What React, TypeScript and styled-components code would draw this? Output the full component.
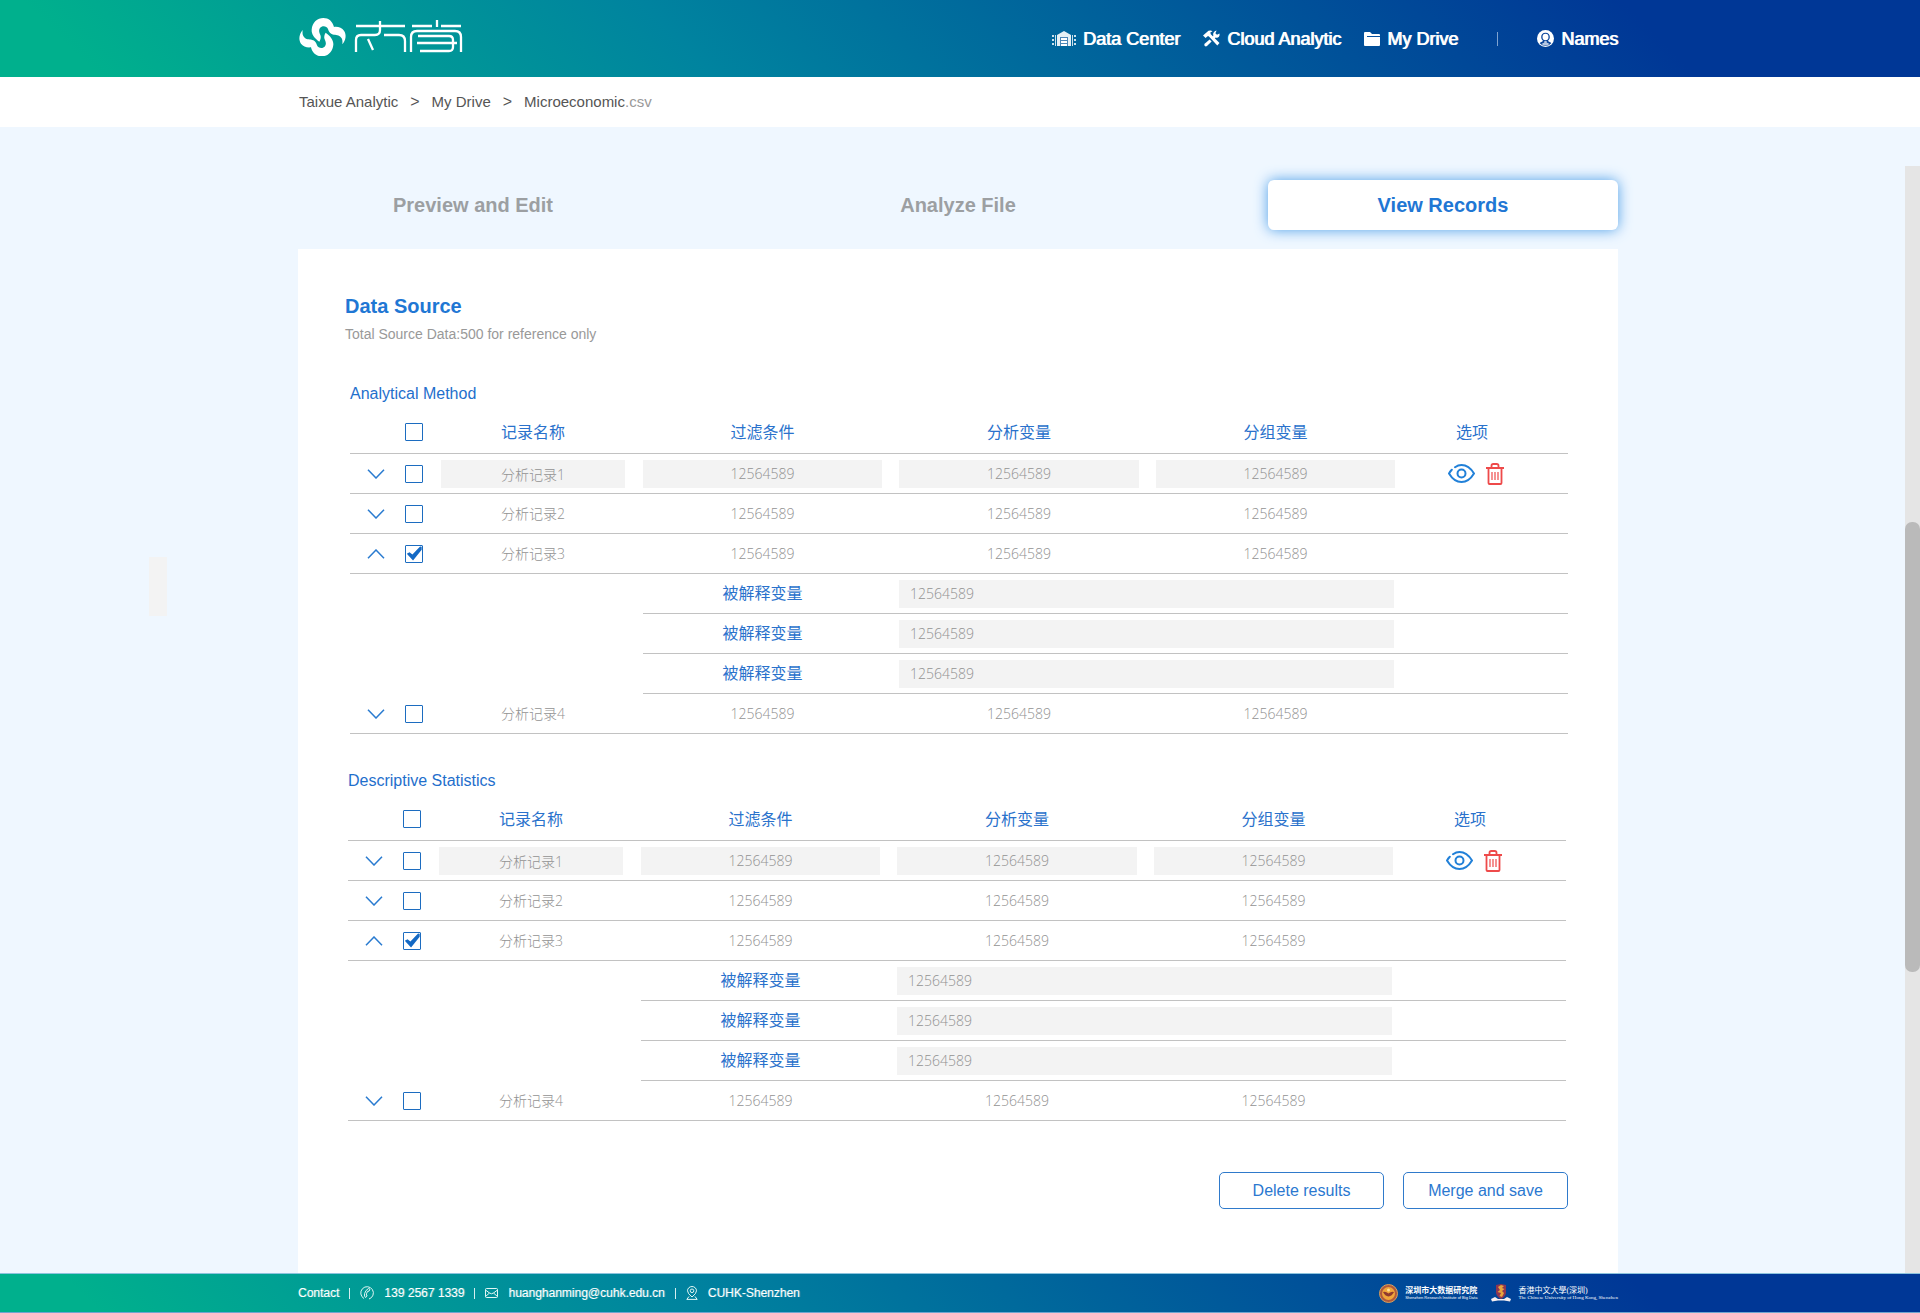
import React, { useState } from 'react';
import styled, { createGlobalStyle, css } from 'styled-components';

const GlobalStyle = createGlobalStyle`
  * { box-sizing: border-box; }
  body {
    margin: 0;
    background: #eff7ff;
    font-family: "Liberation Sans", Arial, "Noto Sans CJK SC", sans-serif;
    font-size: 15px;
    color: #555;
  }
  button, input { font: inherit; }
  a { color: inherit; text-decoration: none; }
`;

const brandGradient = css`
  background: linear-gradient(45deg, #00b08d 5%, #00839f 36%, #003796 85%);
`;

const Page = styled.div`
  min-height: 100vh;
  display: flex;
  flex-direction: column;
`;

const Shell = styled.div`
  width: 100%;
  max-width: 1324px;
  margin: 0 auto;
  padding-right: 4px;
`;

const Header = styled.header`
  ${brandGradient}
  color: #fff;
`;

const HeaderRow = styled(Shell)`
  height: 77px;
  display: flex;
  align-items: center;
  justify-content: space-between;
  padding-left: 1px;
`;

const Nav = styled.nav`
  display: flex;
  align-items: center;
  gap: 23px;
`;

const NavLink = styled.a`
  display: flex;
  align-items: center;
  gap: 7px;
  font-size: 18px;
  line-height: 24px;
  white-space: nowrap;
  text-shadow: 1px 0 #fff;
`;

const NavDivider = styled.span`
  width: 1px;
  height: 14px;
  margin: 0 16px;
  background: #7fa3d0;
`;

const CrumbBar = styled.div`
  background: #fff;
`;

const Crumbs = styled(Shell)`
  height: 50px;
  display: flex;
  align-items: center;
  gap: 12px;
  line-height: 20px;
  padding-left: 1px;
`;

const CrumbArrow = styled.span`
  font-size: 16px;
`;

const Extension = styled.span`
  color: #999;
`;

const Main = styled.main`
  position: relative;
  flex: 1;
  display: flex;
  flex-direction: column;
  padding-top: 53px;
`;

const Content = styled(Shell)`
  flex: 1;
  display: flex;
  flex-direction: column;
  gap: 19px;
`;

const Tabs = styled.div`
  display: flex;
  justify-content: space-between;
`;

const Tab = styled.button<{ $active?: boolean }>`
  width: 350px;
  height: 50px;
  border: 0;
  border-radius: 6px;
  background: ${(p) => (p.$active ? '#fff' : 'transparent')};
  box-shadow: ${(p) => (p.$active ? '0 0 14px #4f9fe8' : 'none')};
  color: ${(p) => (p.$active ? '#1f77d4' : '#9c9fa2')};
  font-size: 20px;
  font-weight: 700;
  cursor: pointer;
`;

const Panel = styled.section`
  flex: 1;
  padding: 45px 50px 64px 47px;
  background: #fff;
`;

const PanelTitle = styled.h1`
  margin: 0;
  font-size: 20px;
  line-height: 24px;
  color: #1f77d4;
`;

const PanelNote = styled.p`
  margin: 6px 0 40px;
  font-size: 14px;
  line-height: 20px;
  color: #999;
`;

const Group = styled.section<{ $start: number; $end: number }>`
  padding-left: ${(p) => p.$start}px;
  padding-right: ${(p) => p.$end}px;
  & + & { margin-top: 37px; }
`;

const GroupTitle = styled.h2`
  margin: 0 0 10px;
  font-size: 16px;
  font-weight: 400;
  line-height: 20px;
  color: #1f6fcc;
`;

const RecordTable = styled.table`
  width: 100%;
  table-layout: fixed;
  border-collapse: separate;
  border-spacing: 0;
  font-family: "Open Sans", "Noto Sans CJK SC", sans-serif;
`;

const Col = styled.col<{ $w?: number }>`
  width: ${(p) => (p.$w ? `${p.$w}px` : 'auto')};
`;

const cell = css`
  height: 40px;
  padding: 0;
  border-bottom: 1px solid #c2c2c2;
  text-align: center;
  line-height: 20px;
`;

const HeadCell = styled.th<{ $start?: number; $end?: number }>`
  ${cell}
  padding: 0 ${(p) => p.$end ?? 0}px 4px ${(p) => p.$start ?? 0}px;
  font-size: 16px;
  font-weight: 400;
  color: #2a72cc;
`;

const Cell = styled.td<{ $start?: number; $end?: number; $plain?: boolean }>`
  ${cell}
  padding: 0 ${(p) => p.$end ?? 0}px 0 ${(p) => p.$start ?? 0}px;
  border-bottom-color: ${(p) => (p.$plain ? 'transparent' : '#c2c2c2')};
  font-size: 14px;
  font-weight: 300;
  color: #929292;
`;

const SubLabel = styled.label`
  font-size: 16px;
  font-weight: 400;
  color: #2a72cc;
`;

const Field = styled.input<{ $left?: boolean }>`
  display: block;
  width: 100%;
  height: 28px;
  padding: 0 11px;
  border: 0;
  border-radius: 0;
  background: #f3f3f3;
  color: #929292;
  font-size: 14px;
  font-weight: 300;
  text-align: ${(p) => (p.$left ? 'left' : 'center')};
`;

const IconButton = styled.button`
  display: inline-flex;
  padding: 0;
  border: 0;
  background: none;
  cursor: pointer;
`;

const Actions = styled.div`
  display: flex;
  align-items: center;
  justify-content: center;
  gap: 11px;
`;

const Check = styled.input`
  appearance: none;
  display: block;
  width: 18px;
  height: 18px;
  margin: 0 auto;
  border: 1px solid #1c6cc0;
  border-radius: 1px;
  background: #fff;
  cursor: pointer;
  &:checked::before {
    content: '';
    display: block;
    width: 16px;
    height: 16px;
    background: #1469c4;
    clip-path: polygon(5% 52%, 22% 42%, 40% 56%, 88% 6%, 98% 8%, 98% 26%, 44% 94%);
  }
`;

const ButtonRow = styled.div`
  display: flex;
  justify-content: flex-end;
  gap: 19px;
  margin-top: 51px;
`;

const OutlineButton = styled.button`
  width: 165px;
  height: 37px;
  border: 1px solid #2f7acb;
  border-radius: 5px;
  background: #fff;
  color: #2b78d0;
  font-size: 16px;
  cursor: pointer;
`;

const ScrollTrack = styled.div`
  position: absolute;
  top: 39px;
  right: 0;
  bottom: 0;
  width: 15px;
  background: #e5e5e5;
`;

const ScrollThumb = styled.div`
  position: absolute;
  top: 356px;
  width: 100%;
  height: 450px;
  border-radius: 7px;
  background: #bababa;
`;

const SideHandle = styled.div`
  position: absolute;
  top: 430px;
  left: 149px;
  width: 18px;
  height: 59px;
  background: #f3f3f3;
`;

const Footer = styled.footer`
  ${brandGradient}
  border-top: 1px solid #8cc3dd;
  border-bottom: 1px solid #6fa5cf;
  color: #fff;
`;

const FooterRow = styled(Shell)`
  height: 38px;
  display: flex;
  align-items: center;
  justify-content: space-between;
`;

const Contacts = styled.address`
  display: flex;
  align-items: center;
  gap: 10px;
  font-size: 12px;
  font-style: normal;
  line-height: 16px;
  text-shadow: 1px 0 rgba(255, 255, 255, 0.35);
`;

const Contact = styled.span`
  display: flex;
  align-items: center;
  gap: 10px;
`;

const ContactDivider = styled.span`
  width: 1px;
  height: 11px;
  background: #d5eef0;
`;

const Partners = styled.div`
  display: flex;
  align-items: center;
  gap: 14px;
`;

const Partner = styled.a`
  display: flex;
  align-items: center;
  gap: 7px;
`;

const PartnerText = styled.span<{ $serif?: boolean }>`
  display: grid;
  font-family: ${(p) =>
    p.$serif
      ? '"Liberation Serif", "Noto Sans CJK TC", serif'
      : '"Liberation Sans", "Noto Sans CJK SC", sans-serif'};
  font-size: 8px;
  font-weight: ${(p) => (p.$serif ? 400 : 700)};
  line-height: 9px;
  white-space: nowrap;
`;

const PartnerSub = styled.small<{ $size: number }>`
  font-size: ${(p) => p.$size}px;
  font-weight: 400;
  line-height: 6px;
`;

const swirl =
  'M118 124C104 114 94 102 95 88C97 66 112 53 130 53C146 53 158 63 162 80C174 78 186 83 192 91C200 103 198 119 187 132C188 122 188 115 181 109C174 102 164 106 155 101C148 97 146 92 144 86C140 76 126 75 120 83C114 92 120 100 122 107C123 114 121 119 118 124Z';

const Logo = () => (
  <svg width="164" height="38" viewBox="0 0 164 38" role="img" aria-label="Taixue">
    <g transform="scale(.3333) translate(-57 -53)" fill="#fff">
      <path d={swirl} />
      <path d={swirl} transform="rotate(180 127.5 110.5)" />
    </g>
    <g fill="none" stroke="#fff" strokeWidth="2.300">
      <path d="M57 8H106M81 3V12Q81 17 76 17H62Q57 17 57 22V34M85 17H100Q106 17 106 23V34M69 21L74 32" />
      <path d="M113 8H133M142 8H162M138 2V9M112 34V19Q112 13 118 13H156Q162 13 162 19V34" />
      <path d="M119 18H150Q154 18 154 22V29Q154 33 150 33H121M118 25H158" />
    </g>
  </svg>
);

const DataCenterIcon = () => (
  <svg width="24" height="18" viewBox="0 0 24 18" fill="#fff" aria-hidden="true">
    <path d="M12 1L19 5V16H5V5Z" opacity=".9" />
    <path d="M8 7H16V16H8Z" fill="#0a5a9c" opacity=".7" />
    <path d="M9 8H15V10H9ZM9 11H15V13H9ZM9 14H15V16H9Z" />
    <path d="M0 5H2V7H0ZM0 9H2V11H0ZM0 13H2V15H0ZM22 5H24V7H22ZM22 9H24V11H22ZM22 13H24V15H22ZM3 5H4V16H3ZM20 5H21V16H20Z" opacity=".8" />
  </svg>
);

const ToolsIcon = () => (
  <svg width="17" height="17" viewBox="0 0 17 17" fill="#fff" aria-hidden="true">
    <path d="M0 5.500L5.500 .8Q8 0 9.500 1.200L7.300 2.600L7.800 4.200L16.500 13L14.300 15.500L5.700 6.300L4.600 6.200L2.600 8Z" />
    <path d="M13.600 .6L12.400 3.200L14 4.800L16.500 3.500Q17 6.600 14.800 7.600Q13.600 8 12.600 7.600L11.300 8.900L9.300 6.900L10.300 5.900Q9.600 3.700 11 2Q12.100 .7 13.600 .6Z" />
    <path d="M6.600 9.400L8.600 11.500L4 16Q2.800 16.800 1.800 15.900T1.600 13.800Z" />
  </svg>
);

const FolderIcon = () => (
  <svg width="16" height="14" viewBox="0 0 16 14" aria-hidden="true">
    <path d="M0 1Q0 0 1 0H6L8 2H15Q16 2 16 3V13Q16 14 15 14H1Q0 14 0 13Z" fill="#fff" />
    <path d="M3 4.500H16" stroke="#0550a0" strokeWidth="1" />
  </svg>
);

const UserIcon = () => (
  <svg width="17" height="17" viewBox="0 0 17 17" aria-hidden="true">
    <circle cx="8.5" cy="8.500" r="8.500" fill="#fff" />
    <path
      d="M8.500 2.800C11.300 2.800 12.800 4.600 12.800 7C12.800 8.800 12 10 11 10.800C11.400 12 14 12 14.300 13.300Q12 15.900 8.500 15.900T2.700 13.300C3 12 5.600 12 6 10.800C5 10 4.200 8.800 4.200 7C4.200 4.600 5.700 2.800 8.500 2.800Z"
      fill="#0a459b"
    />
    <ellipse cx="8.5" cy="7" rx="3" ry="3.300" fill="#fff" />
    <path d="M4.500 14Q5.500 13.300 7.300 12.600V11H9.700V12.600Q11.500 13.300 12.500 14Q10.500 15.500 8.500 15.500T4.500 14Z" fill="#fff" opacity=".7" />
  </svg>
);

const Chevron = ({ up }: { up: boolean }) => (
  <svg width="18" height="10" viewBox="0 0 18 10" fill="none" stroke="#2a7bd0" strokeWidth="1.500" aria-hidden="true">
    <path d={up ? 'M1 9.300L9 1L17 9.300' : 'M1 .7L9 9L17 .7'} />
  </svg>
);

const EyeIcon = () => (
  <svg width="27" height="19" viewBox="0 0 27 19" fill="none" stroke="#2180d8" strokeWidth="2" strokeLinecap="round" aria-hidden="true">
    <path d="M7 3.200C9 1.800 11 1 13.500 1C19 1 23 4.500 26 9.500C23 14.500 19 18 13.500 18S4 14.500 1 9.500Q2.200 7.400 3.800 5.800" />
    <circle cx="13.5" cy="9.500" r="4" />
  </svg>
);

const TrashIcon = () => (
  <svg width="18" height="22" viewBox="0 0 18 22" fill="none" stroke="#ee4a4a" strokeWidth="1.800" aria-hidden="true">
    <path d="M0 5H18M5.500 5V2.800Q5.500 1 7.300 1H10.700Q12.500 1 12.500 2.800V5M2.500 5V20Q2.500 21 3.500 21H14.500Q15.500 21 15.500 20V5" />
    <path d="M6 9V17M9 9V17M12 9V17" strokeWidth="1.200" />
  </svg>
);

const PhoneIcon = () => (
  <svg width="14" height="14" viewBox="0 0 14 14" fill="none" stroke="#e2f6f4" aria-hidden="true">
    <path d="M4 12.500A6.300 6.300 0 1 1 9 13" />
    <path d="M8.500 2.500L10 3.200L9 5.200H7.800Q6.200 7.200 6.400 9L7.200 10L5.500 11.500Q4 10.500 4.600 7.500Q5.600 4 8.500 2.500Z" />
  </svg>
);

const MailIcon = () => (
  <svg width="13" height="10" viewBox="0 0 13 10" fill="none" stroke="#e2f6f4" aria-hidden="true">
    <rect x=".5" y=".5" width="12" height="9" rx="1" />
    <path d="M.5 2L4.500 5Q6.500 6.500 8.500 5L12.500 2M.5 8.500L4.500 5M12.500 8.500L8.500 5" />
  </svg>
);

const PinIcon = () => (
  <svg width="12" height="14" viewBox="0 0 12 14" fill="none" stroke="#e2f6f4" aria-hidden="true">
    <path d="M6 11Q1.500 7.500 1.500 4.800A4.500 4.300 0 0 1 10.500 4.800Q10.500 7.500 6 11Z" />
    <circle cx="6" cy="4.800" r="1.800" />
    <path d="M3 10.500L.8 13.400H11.200L9 10.500" />
  </svg>
);

const SealLogo = () => (
  <svg width="19" height="19" viewBox="0 0 19 19" aria-hidden="true">
    <circle cx="9.500" cy="9.500" r="9" fill="#b0593c" stroke="#d9a05c" />
    <circle cx="9.500" cy="9.500" r="6.500" fill="#f0a63a" />
    <path d="M4 8Q6.500 7 9.500 9.500Q12.500 7 15 8Q13 12 9.500 12.500Q6 12 4 8Z" fill="#8f3a30" />
    <circle cx="9.500" cy="6" r="1.500" fill="#ffe09a" />
  </svg>
);

const CrestLogo = () => (
  <svg width="20" height="18" viewBox="0 0 20 18" aria-hidden="true">
    <path d="M5 1L10 0L15 1V9Q14 13 10 15Q6 13 5 9Z" fill="#8c3553" />
    <path d="M7 3L10 1L13 2L11 4L13.500 5L11 7L13 9L11 13L8.500 12L10 9L6.500 8L9 6Z" fill="#e8a63c" />
    <path d="M0 15L4 13L7 15H13L16 13L20 15L19 17.500L13 16.500H7L1 17.500Z" fill="#f5eef0" />
  </svg>
);

const VALUE = '12564589';
const SUB_ROWS = ['被解释变量', '被解释变量', '被解释变量'];
const RECORDS = [
  { name: '分析记录1', editable: true },
  { name: '分析记录2', editable: false },
  { name: '分析记录3', editable: false },
  { name: '分析记录4', editable: false },
];

function RecordGroup({ id, title, start, end }: { id: string; title: string; start: number; end: number }) {
  const [open, setOpen] = useState<number[]>([2]);
  const toggle = (i: number) =>
    setOpen((list) => (list.includes(i) ? list.filter((n) => n !== i) : [...list, i]));

  return (
    <Group $start={start} $end={end}>
      <GroupTitle>{title}</GroupTitle>
      <RecordTable>
        <colgroup>
          <Col $w={52} />
          <Col $w={24} />
          <Col $w={217} />
          <Col $w={256} />
          <Col $w={257} />
          <Col $w={256} />
          <Col />
        </colgroup>
        <thead>
          <tr>
            <HeadCell />
            <HeadCell>
              <Check type="checkbox" aria-label="Select all records" />
            </HeadCell>
            <HeadCell $start={15} $end={18}>记录名称</HeadCell>
            <HeadCell $end={17}>过滤条件</HeadCell>
            <HeadCell $end={17}>分析变量</HeadCell>
            <HeadCell $end={17}>分组变量</HeadCell>
            <HeadCell $end={36}>选项</HeadCell>
          </tr>
        </thead>
        <tbody>
          {RECORDS.map((record, i) => {
            const expanded = open.includes(i);
            return (
              <React.Fragment key={record.name}>
                <tr>
                  <Cell>
                    <IconButton type="button" aria-label="Toggle details" aria-expanded={expanded} onClick={() => toggle(i)}>
                      <Chevron up={expanded} />
                    </IconButton>
                  </Cell>
                  <Cell>
                    <Check type="checkbox" aria-label={record.name} defaultChecked={i === 2} />
                  </Cell>
                  <Cell $start={15} $end={18}>
                    {record.editable ? <Field aria-label="记录名称" defaultValue={record.name} /> : record.name}
                  </Cell>
                  {['过滤条件', '分析变量', '分组变量'].map((label) => (
                    <Cell key={label} $end={17}>
                      {record.editable ? <Field aria-label={label} defaultValue={VALUE} /> : VALUE}
                    </Cell>
                  ))}
                  <Cell $end={28}>
                    {record.editable && (
                      <Actions>
                        <IconButton type="button" aria-label="View">
                          <EyeIcon />
                        </IconButton>
                        <IconButton type="button" aria-label="Delete">
                          <TrashIcon />
                        </IconButton>
                      </Actions>
                    )}
                  </Cell>
                </tr>
                {expanded &&
                  SUB_ROWS.map((label, n) => (
                    <tr key={n}>
                      <Cell colSpan={3} $plain />
                      <Cell $end={17}>
                        <SubLabel htmlFor={`${id}-${i}-${n}`}>{label}</SubLabel>
                      </Cell>
                      <Cell colSpan={2} $end={18}>
                        <Field id={`${id}-${i}-${n}`} $left defaultValue={VALUE} />
                      </Cell>
                      <Cell />
                    </tr>
                  ))}
              </React.Fragment>
            );
          })}
        </tbody>
      </RecordTable>
    </Group>
  );
}

export default function App() {
  return (
    <Page>
      <GlobalStyle />
      <Header>
        <HeaderRow>
          <a href="#home">
            <Logo />
          </a>
          <Nav>
            <NavLink href="#data">
              <DataCenterIcon />
              Data Center
            </NavLink>
            <NavLink href="#cloud">
              <ToolsIcon />
              Cloud Analytic
            </NavLink>
            <NavLink href="#drive">
              <FolderIcon />
              My Drive
            </NavLink>
            <NavDivider />
            <NavLink href="#account">
              <UserIcon />
              Names
            </NavLink>
          </Nav>
        </HeaderRow>
      </Header>

      <CrumbBar>
        <Crumbs as="nav">
          <a href="#analytic">Taixue Analytic</a>
          <CrumbArrow>&gt;</CrumbArrow>
          <a href="#drive">My Drive</a>
          <CrumbArrow>&gt;</CrumbArrow>
          <span>
            Microeconomic<Extension>.csv</Extension>
          </span>
        </Crumbs>
      </CrumbBar>

      <Main>
        <Content>
          <Tabs>
            <Tab type="button">Preview and Edit</Tab>
            <Tab type="button">Analyze File</Tab>
            <Tab type="button" $active>
              View Records
            </Tab>
          </Tabs>
          <Panel>
            <PanelTitle>Data Source</PanelTitle>
            <PanelNote>Total Source Data:500 for reference only</PanelNote>
            <RecordGroup id="method" title="Analytical Method" start={5} end={0} />
            <RecordGroup id="stats" title="Descriptive Statistics" start={3} end={2} />
            <ButtonRow>
              <OutlineButton type="button">Delete results</OutlineButton>
              <OutlineButton type="button">Merge and save</OutlineButton>
            </ButtonRow>
          </Panel>
        </Content>
        <SideHandle />
        <ScrollTrack>
          <ScrollThumb />
        </ScrollTrack>
      </Main>

      <Footer>
        <FooterRow>
          <Contacts>
            <span>Contact</span>
            <ContactDivider />
            <Contact>
              <PhoneIcon />
              139 2567 1339
            </Contact>
            <ContactDivider />
            <Contact>
              <MailIcon />
              huanghanming@cuhk.edu.cn
            </Contact>
            <ContactDivider />
            <Contact>
              <PinIcon />
              CUHK-Shenzhen
            </Contact>
          </Contacts>
          <Partners>
            <Partner href="#sribd">
              <SealLogo />
              <PartnerText>
                深圳市大数据研究院
                <PartnerSub $size={4}>Shenzhen Research Institute of Big Data</PartnerSub>
              </PartnerText>
            </Partner>
            <Partner href="#cuhk">
              <CrestLogo />
              <PartnerText $serif>
                香港中文大學(深圳)
                <PartnerSub $size={5}>The Chinese University of Hong Kong, Shenzhen</PartnerSub>
              </PartnerText>
            </Partner>
          </Partners>
        </FooterRow>
      </Footer>
    </Page>
  );
}
